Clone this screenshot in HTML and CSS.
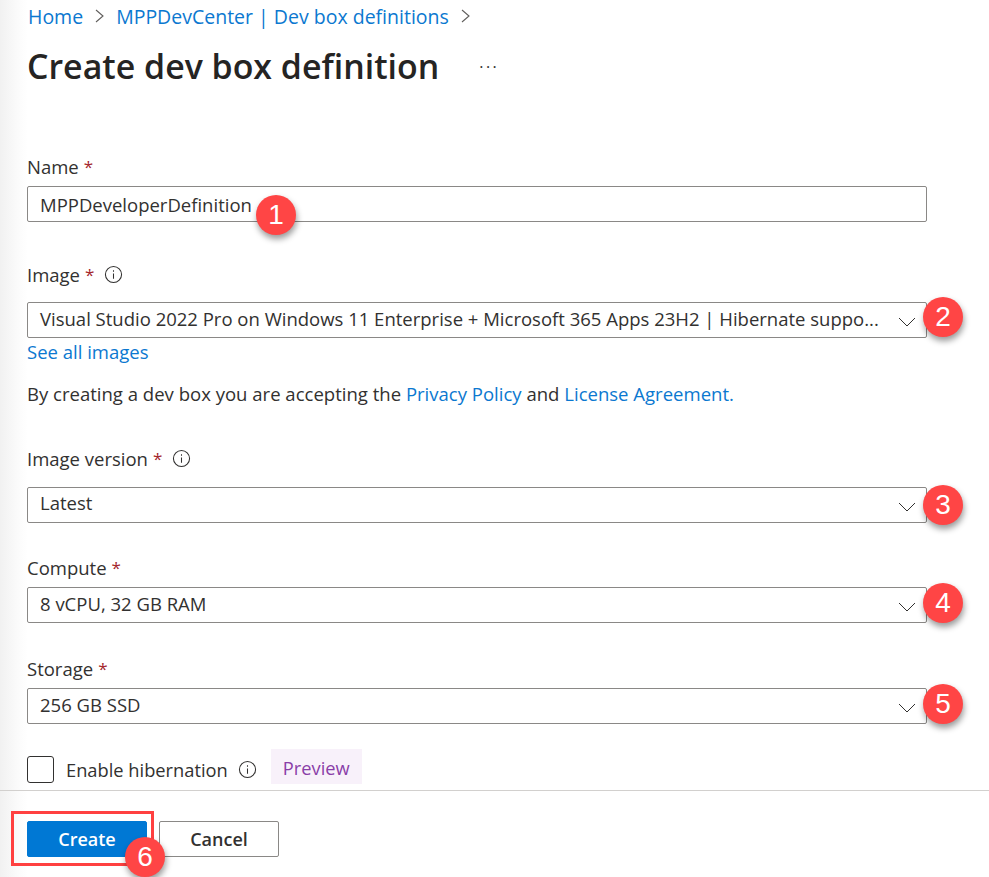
FILE: index.html
```html
<!DOCTYPE html>
<html lang="en">
<head>
<meta charset="utf-8">
<title>Create dev box definition</title>
<link rel="stylesheet" href="styles.css">
</head>
<body>
<div class="page">
  <nav class="crumbs">
    <a href="#">Home</a>
    <svg class="sep" viewBox="0 0 10 16"><path d="M1 2l7 6-7 6"/></svg>
    <a href="#">MPPDevCenter | Dev box definitions</a>
    <svg class="sep" viewBox="0 0 10 16"><path d="M1 2l7 6-7 6"/></svg>
  </nav>
  <header class="title-row">
    <h1>Create dev box definition</h1>
    <span class="more">···</span>
  </header>
  <main class="form">
    <div class="group g-name">
      <label class="label">Name <span class="req">*</span></label>
      <div class="field"><span class="value">MPPDeveloperDefinition</span></div>
      <span class="badge b1">1</span>
    </div>
    <div class="group g-image">
      <label class="label">Image <span class="req">*</span>
        <svg class="info" viewBox="0 0 20 20"><circle cx="10" cy="10" r="8.5"/><path d="M10 9v5.5M10 5.6v1.4"/></svg>
      </label>
      <div class="field select"><span class="value">Visual Studio 2022 Pro on Windows 11 Enterprise + Microsoft 365 Apps 23H2 | Hibernate suppo...</span>
        <svg class="chev" viewBox="0 0 18 10"><path d="M1 1l8 8 8-8"/></svg>
      </div>
      <span class="badge b2">2</span>
      <a class="see" href="#">See all images</a>
      <p class="legal">By creating a dev box you are accepting the <a href="#">Privacy Policy</a> and <a href="#">License Agreement.</a></p>
    </div>
    <div class="group g-version">
      <label class="label">Image version <span class="req">*</span>
        <svg class="info" viewBox="0 0 20 20"><circle cx="10" cy="10" r="8.5"/><path d="M10 9v5.5M10 5.6v1.4"/></svg>
      </label>
      <div class="field select"><span class="value">Latest</span>
        <svg class="chev" viewBox="0 0 18 10"><path d="M1 1l8 8 8-8"/></svg>
      </div>
      <span class="badge b3">3</span>
    </div>
    <div class="group g-compute">
      <label class="label">Compute <span class="req">*</span></label>
      <div class="field select"><span class="value">8 vCPU, 32 GB RAM</span>
        <svg class="chev" viewBox="0 0 18 10"><path d="M1 1l8 8 8-8"/></svg>
      </div>
      <span class="badge b4">4</span>
    </div>
    <div class="group g-storage">
      <label class="label">Storage <span class="req">*</span></label>
      <div class="field select"><span class="value">256 GB SSD</span>
        <svg class="chev" viewBox="0 0 18 10"><path d="M1 1l8 8 8-8"/></svg>
      </div>
      <span class="badge b4">5</span>
    </div>
    <div class="hibernate">
      <span class="check"></span>
      <span class="check-label">Enable hibernation</span>
      <svg class="info" viewBox="0 0 20 20"><circle cx="10" cy="10" r="8.5"/><path d="M10 9v5.5M10 5.6v1.4"/></svg>
      <span class="preview">Preview</span>
    </div>
  </main>
  <footer class="actions">
    <button class="btn primary">Create</button>
    <button class="btn">Cancel</button>
    <span class="highlight"></span>
    <span class="badge b6">6</span>
  </footer>
</div>
</body>
</html>
```
FILE: styles.css
```css
* { box-sizing: border-box; }
html, body { margin: 0; height: 100%; }
body {
  font-family: "Open Sans", "Noto Sans", "Liberation Sans", sans-serif;
  color: #323130;
  background: linear-gradient(to right, #f1f1f1 0, #fbfbfb 18px, #fff 28px);
  overflow: hidden;
}
.page { height: 877px; padding-top: 3px; position: relative; }
a { color: #0b78d0; text-decoration: none; }
.crumbs {
  display: flex; align-items: center; height: 26px; padding-left: 28px;
  font-size: 19.5px;
}
.sep { width: 10px; height: 16px; margin: 0 11px 0 12px; }
.sep path { fill: none; stroke: #605e5c; stroke-width: 1.1; }
.title-row { display: flex; align-items: center; height: 46px; margin-top: 14px; padding-left: 27px; }
h1 { margin: 0; font-size: 33.9px; font-weight: 600; color: #252423; line-height: 46px; }
.more { margin-left: 40px; padding-top: 2px; font-size: 16px; letter-spacing: 2.5px; color: #323130; }
.form { padding: 0 62px 0 27px; }
.group { position: relative; display: flex; flex-direction: column; }
.label {
  display: flex; align-items: center; gap: 5px;
  height: 26px; padding-bottom: 2px; font-size: 18.5px; color: #323130;
}
.req { color: #a4262c; font-size: 17px; }
.info { width: 19px; height: 19px; margin-left: 5px; flex: none; }
.info circle, .info path { fill: none; stroke: #323130; stroke-width: 1.1; }
.field {
  height: 36px; border: 1px solid #8a8886; border-radius: 2px; background: #fff;
  display: flex; align-items: center; justify-content: space-between;
  padding: 0 10px 0 12px;
}
.value { font-size: 18.5px; white-space: nowrap; color: #323130; }
.select .value { margin-bottom: 4px; }
.g-version .select .value { margin-bottom: 6px; }
.chev { width: 18px; height: 10px; flex: none; margin-top: 3px; }
.chev path { fill: none; stroke: #323130; stroke-width: 1; }
.g-name { margin-top: 65px; }
.g-name .label { margin-bottom: 6px; }
.g-image { margin-top: 40px; }
.g-image .label { margin-bottom: 14px; }
.field + .see { margin-top: 2px; }
.see { font-size: 18.5px; line-height: 28px; height: 28px; }
.legal { margin: 15px 0 0; font-size: 18.55px; line-height: 26px; white-space: nowrap; }
.g-version { margin-top: 39px; }
.g-version .label { margin-bottom: 15px; }
.g-compute { margin-top: 32px; }
.g-compute .label { margin-bottom: 6px; }
.g-storage { margin-top: 33px; }
.g-storage .label { margin-bottom: 6px; }
.badge {
  position: absolute; width: 40px; height: 40px; border-radius: 50%;
  background: #ff4545; color: #fff; font-size: 28px; line-height: 40px; text-align: center;
  box-shadow: 1px 4px 6px rgba(0,0,0,.4);
  font-family: "Liberation Sans", sans-serif;
}
.b1 { left: 229px; bottom: -13px; }
.b2 { right: -36px; top: 35px; }
.b3 { right: -36px; bottom: -2px; }
.b4 { right: -36px; bottom: 0; }
.hibernate { display: flex; align-items: center; height: 36px; margin-top: 27px; }
.check { width: 27px; height: 27px; border: 1px solid #323130; border-radius: 3px; background: #fff; flex: none; }
.check-label { margin-left: 12px; font-size: 18.3px; }
.hibernate .info { margin-left: 10px; }
.preview {
  margin-left: 14px; height: 35px; padding: 0 12px; line-height: 37px; margin-bottom: 5px;
  background: #f8f1fa; color: #8a3ea8; font-size: 18.3px;
}
.actions {
  position: absolute; left: 0; right: 0; top: 790px; bottom: 0;
  border-top: 1px solid #d2d0ce; display: flex; gap: 12px; padding: 30px 0 0 27px; align-items: flex-start;
}
.btn {
  width: 120px; height: 36px; border: 1px solid #8a8886; border-radius: 2px; background: #fff;
  font: 600 18px "Open Sans", sans-serif; color: #323130; padding: 0;
}
.primary { background: #0078d4; border-color: #0078d4; color: #fff; }
.highlight { position: absolute; left: 11px; top: 20px; width: 143px; height: 55px; border: 3px solid #ff4040; }
.b6 { left: 125px; top: 46px; }
```
